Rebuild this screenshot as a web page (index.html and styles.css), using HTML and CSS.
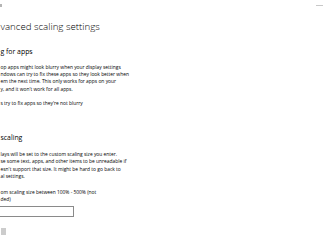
FILE: index.html
```html
<!DOCTYPE html>
<html lang="en">
<head>
<meta charset="utf-8">
<title>Advanced scaling settings</title>
<link rel="stylesheet" href="styles.css">
</head>
<body>
<div class="window">
  <div class="titlebar">
    <span class="back"></span>
    <span class="minimize"></span>
  </div>
  <main class="content">
    <h1 class="title">vanced scaling settings</h1>
    <section class="group">
      <h2 class="heading">g for apps</h2>
      <p class="desc">op apps might look blurry when your display settings<br>ndows can try to fix these apps so they look better when<br>em the next time. This only works for apps on your<br>y, and it won't work for all apps.</p>
      <div class="toggle-label">s try to fix apps so they're not blurry</div>
    </section>
    <section class="group group-custom">
      <h2 class="heading">scaling</h2>
      <p class="desc">lays will be set to the custom scaling size you enter.<br>se some text, apps, and other items to be unreadable if<br>esn't support that size. It might be hard to go back to<br>al settings.</p>
      <label class="field-label" for="scale">om scaling size between 100% - 500% (not<br>ded)</label>
      <input class="field" id="scale" type="text">
      <div class="apply"></div>
    </section>
  </main>
</div>
</body>
</html>
```
FILE: styles.css
```css
html, body {
  margin: 0;
  padding: 0;
  background: #ffffff;
}
body {
  width: 324px;
  height: 235px;
  overflow: hidden;
  font-family: "Open Sans", "Noto Sans", sans-serif;
  color: #000000;
}
.window {
  display: flex;
  flex-direction: column;
}
.titlebar {
  height: 12px;
  display: flex;
  align-items: center;
  justify-content: space-between;
}
.back {
  width: 2px;
  height: 3px;
  margin-top: -2px;
  background: #b5b5b5;
}
.minimize {
  width: 7px;
  height: 1px;
  margin-top: -1px;
  margin-right: 1px;
  background: #c8c8c8;
}
.content {
  display: flex;
  flex-direction: column;
  align-items: flex-start;
  padding-left: 0.5px;
}
.title {
  margin: 7.5px 0 0 0;
  font-size: 9.7px;
  line-height: 13px;
  font-weight: 300;
  white-space: nowrap;
}
.group {
  display: flex;
  flex-direction: column;
  align-items: flex-start;
}
.heading {
  margin: 14px 0 0 0;
  font-size: 6.9px;
  line-height: 9px;
  font-weight: 400;
  white-space: nowrap;
}
.group-custom .heading {
  margin-top: 25.5px;
}
.desc {
  margin: 8.1px 0 0 0;
  font-size: 4.9px;
  line-height: 7.35px;
  white-space: nowrap;
}
.group-custom .desc {
  margin-top: 9.1px;
}
.toggle-label {
  margin-top: 7px;
  font-size: 4.9px;
  line-height: 7.35px;
  white-space: nowrap;
}
.field-label {
  display: block;
  margin-top: 8.4px;
  font-size: 4.9px;
  line-height: 7.35px;
  white-space: nowrap;
}
.field {
  box-sizing: border-box;
  margin: 3px 0 0 -2px;
  width: 75.5px;
  height: 10.7px;
  padding: 0;
  border: 1px solid #8a8a8a;
  border-radius: 0;
  background: #ffffff;
  outline: none;
}
.apply {
  margin-top: 11px;
  width: 5px;
  height: 9px;
  background: #cccccc;
}
```
